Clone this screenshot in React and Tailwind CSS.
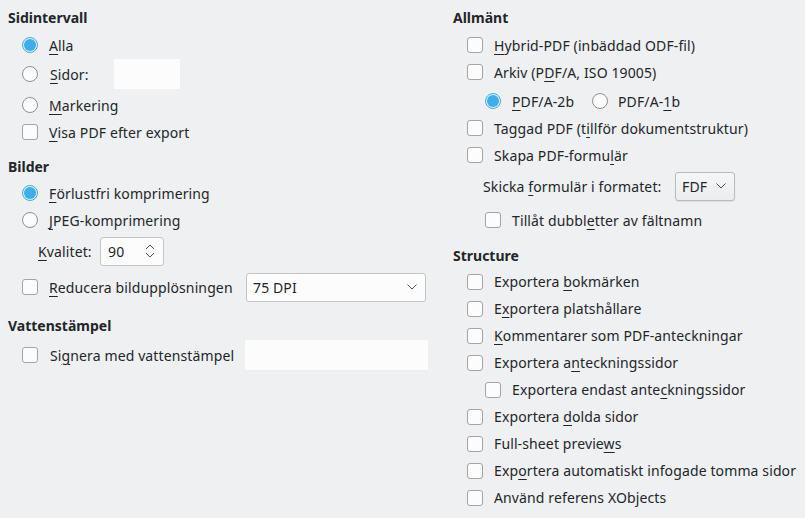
import React from "react";

const font = { fontFamily: '"Noto Sans", "Open Sans", sans-serif' };

function U({ children }) {
  return <span className="underline underline-offset-[3px] decoration-1">{children}</span>;
}

function Check({ left = "ml-[22px]" }) {
  return (
    <span className={`${left} w-[16px] h-[16px] shrink-0 rounded-[3px] border border-[#a2a4a6] bg-[#fcfcfc]`} />
  );
}

function Radio({ checked, left = "ml-[22px]" }) {
  if (checked)
    return (
      <span className={`${left} w-[16px] h-[16px] shrink-0 rounded-full border border-[#3daee9] bg-[#d9eef9] flex items-center justify-center`}>
        <span className="w-[12px] h-[12px] rounded-full bg-[#3daee9]" />
      </span>
    );
  return <span className={`${left} w-[16px] h-[16px] shrink-0 rounded-full border border-[#8e9092] bg-[#fcfcfc]`} />;
}

function Heading({ children, className = "" }) {
  return <div className={`h-[20px] flex items-center font-bold text-[14px] tracking-normal ${className}`}>{children}</div>;
}

function Row({ className = "", children }) {
  return <div className={`flex items-center h-[26px] ${className}`}>{children}</div>;
}

function Chevron() {
  return (
    <svg width="10" height="6" viewBox="0 0 10 6" fill="none" stroke="#4d4f51" strokeWidth="1">
      <path d="M0.5 0.5 L5 5 L9.5 0.5" />
    </svg>
  );
}

function SpinArrows() {
  return (
    <svg width="10" height="16" viewBox="0 0 10 16" fill="none" stroke="#4d4f51" strokeWidth="1">
      <path d="M1 6 L5 2 L9 6" />
      <path d="M1 10 L5 14 L9 10" />
    </svg>
  );
}

export default function App() {
  return (
    <div className="w-[805px] h-[518px] bg-[#eff0f1] text-[#232629] text-[14px] tracking-[0.12px] flex overflow-hidden" style={font}>
      {/* Left column */}
      <div className="w-[445px] flex flex-col pl-[8px]">
        <Heading className="mt-[7px]">Sidintervall</Heading>
        <Row className="mt-[5px]">
          <Radio checked left="ml-[14px]" />
          <span className="ml-[11px]"><U>A</U>lla</span>
        </Row>
        <div className="flex items-center h-[30px] mt-[1px]">
          <Radio left="ml-[14px]" />
          <span className="ml-[12px] w-[64px]"><U>S</U>idor:</span>
          <span className="w-[66px] h-[30px] bg-[#fcfcfc]" />
        </div>
        <Row className="mt-[3px]">
          <Radio left="ml-[14px]" />
          <span className="ml-[11px]"><U>M</U>arkering</span>
        </Row>
        <Row className="mt-[1px]">
          <Check left="ml-[14px]" />
          <span className="ml-[11px]"><U>V</U>isa PDF efter export</span>
        </Row>

        <Heading className="mt-[11px]">Bilder</Heading>
        <Row className="mt-[4px]">
          <Radio checked left="ml-[14px]" />
          <span className="ml-[11px]"><U>F</U>örlustfri komprimering</span>
        </Row>
        <Row className="mt-[1px]">
          <Radio left="ml-[14px]" />
          <span className="ml-[11px]"><U>J</U>PEG-komprimering</span>
        </Row>
        <div className="flex items-center h-[30px] mt-[3px]">
          <span className="ml-[30px] w-[62px]"><U>K</U>valitet:</span>
          <div className="w-[64px] h-[29px] rounded-[3px] border border-[#c3c5c7] bg-[#fcfcfc] flex items-center justify-between pl-[7px] pr-[8px]">
            <span>90</span>
            <SpinArrows />
          </div>
        </div>
        <div className="flex items-center h-[30px] mt-[6px]">
          <Check left="ml-[14px]" />
          <span className="ml-[11px] w-[197px]"><U>R</U>educera bildupplösningen</span>
          <div className="w-[180px] h-[29px] rounded-[3px] border border-[#c3c5c7] bg-[#fcfcfc] flex items-center justify-between pl-[6px] pr-[8px]">
            <span>75 DPI</span>
            <Chevron />
          </div>
        </div>

        <Heading className="mt-[13px]">Vattenstämpel</Heading>
        <div className="flex items-center h-[30px] mt-[5px]">
          <Check left="ml-[14px]" />
          <span className="ml-[12px] w-[195px]">Si<U>g</U>nera med vattenstämpel</span>
          <span className="w-[183px] h-[30px] bg-[#fcfcfc]" />
        </div>
      </div>

      {/* Right column */}
      <div className="flex-1 flex flex-col pl-[8px]">
        <Heading className="mt-[7px]">Allmänt</Heading>
        <Row className="mt-[5px]">
          <Check left="ml-[14px]" />
          <span className="ml-[11px]"><U>H</U>ybrid-PDF (inbäddad ODF-fil)</span>
        </Row>
        <Row className="mt-[1px]">
          <Check left="ml-[14px]" />
          <span className="ml-[11px]">Arkiv (P<U>D</U>F/A, ISO 19005)</span>
        </Row>
        <Row className="mt-[3px]">
          <Radio checked left="ml-[32px]" />
          <span className="ml-[11px] w-[80px]"><U>P</U>DF/A-2b</span>
          <Radio left="ml-0" />
          <span className="ml-[10px]">PDF/A-<U>1</U>b</span>
        </Row>
        <Row className="mt-[1px]">
          <Check left="ml-[14px]" />
          <span className="ml-[11px]">Taggad PDF (t<U>i</U>llför dokumentstruktur)</span>
        </Row>
        <Row className="mt-[1px]">
          <Check left="ml-[14px]" />
          <span className="ml-[11px]">Skapa PDF-formu<U>l</U>är</span>
        </Row>
        <div className="flex items-center h-[30px] mt-[3px]">
          <span className="ml-[30px] w-[192px]">Skicka <U>f</U>ormulär i formatet:</span>
          <div className="w-[60px] h-[29px] rounded-[3px] border border-[#b8babc] bg-gradient-to-b from-[#f5f6f7] to-[#eceded] shadow-[0_1px_1px_rgba(0,0,0,0.08)] flex items-center justify-between pl-[6px] pr-[8px]">
            <span>FDF</span>
            <Chevron />
          </div>
        </div>
        <Row className="mt-[6px]">
          <Check left="ml-[32px]" />
          <span className="ml-[11px]">Tillåt dubbl<U>e</U>tter av fältnamn</span>
        </Row>

        <Heading className="mt-[12px]">Structure</Heading>
        <div className="mt-[3px] flex flex-col">
          {[
            [14, <>Exportera <U>b</U>okmärken</>],
            [14, <>E<U>x</U>portera platshållare</>],
            [14, <><U>K</U>ommentarer som PDF-anteckningar</>],
            [14, <>Exportera a<U>n</U>teckningssidor</>],
            [32, <>Exportera endast ante<U>c</U>kningssidor</>],
            [14, <>Exportera <U>d</U>olda sidor</>],
            [14, <>Full-sheet previe<U>w</U>s</>],
            [14, <>Exp<U>o</U>rtera automatiskt infogade tomma sidor</>],
            [14, <>Använd referens XObjects</>],
          ].map(([ml, label], i) => (
            <div key={i} className="flex items-center h-[27px]">
              <Check left={ml === 32 ? "ml-[32px]" : "ml-[14px]"} />
              <span className="ml-[11px]">{label}</span>
            </div>
          ))}
        </div>
      </div>
    </div>
  );
}
